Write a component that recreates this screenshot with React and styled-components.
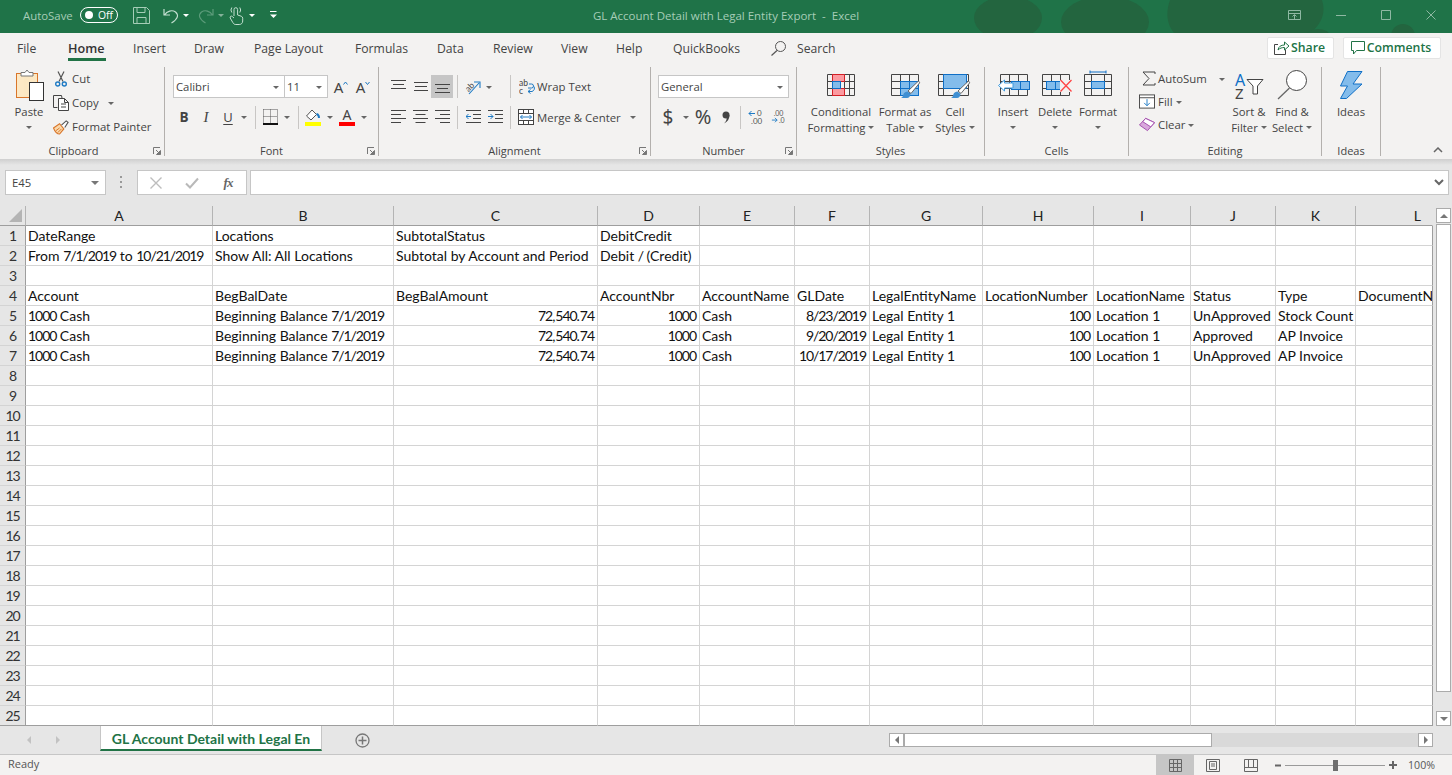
import React from 'react';
import styled, { createGlobalStyle } from 'styled-components';

const UI = `"Open Sans", "Noto Sans", sans-serif`;
const CELL = `Lato, "Liberation Sans", sans-serif`;

const Global = createGlobalStyle`
  html, body { margin: 0; padding: 0; overflow: hidden; background: #f3f2f1; }
  #root { width: 1452px; height: 775px; }
  * { box-sizing: border-box; }
`;

const Window = styled.div`
  width: 1452px; height: 775px; display: flex; flex-direction: column;
  font-family: ${UI}; font-size: 11.4px; color: #444; background: #f3f2f1; overflow: hidden;
`;

/* ---------- title bar ---------- */
const TitleBar = styled.header`
  position: relative; height: 33px; flex: none; background: #1f7348; color: #a6cdb7;
  display: grid; grid-template-columns: 1fr auto 1fr; align-items: center; padding-bottom: 3px;
`;
const Pattern = styled.svg`position: absolute; inset: 0; pointer-events: none;`;
const Qat = styled.div`position: relative; display: flex; align-items: center; padding-left: 23px; height: 30px;`;
const AutoSave = styled.span`font-size: 11.4px; width: 57px;`;
const Toggle = styled.div`
  width: 38px; height: 16px; border: 1px solid #fff; border-radius: 8px; display: flex; align-items: center;
  padding: 0 4px 0 4px; justify-content: space-between; color: #fff; font-size: 10.4px;
  &::before { content: ''; width: 8px; height: 8px; border-radius: 50%; background: #fff; }
`;
const TitleText = styled.div`position: relative; font-size: 11.5px; white-space: pre;`;
const WinButtons = styled.div`position: relative; display: flex; justify-content: flex-end; align-items: center; padding-right: 16px; gap: 35px;`;
const WinIcon = styled.svg`display: block; flex: none;`;
const QatSlot = styled.span`display: flex; margin-left: ${p => p.$ml || 0}px; opacity: ${p => p.$dim ? .45 : 1};`;

/* ---------- ribbon tabs ---------- */
const TabRow = styled.nav`height: 33px; flex: none; display: flex; align-items: center; padding-left: 17px;`;
const Tab = styled.div`
  width: ${p => p.$w}px; font-size: 12.2px; height: 33px; line-height: 31px; color: #444; white-space: nowrap; position: relative;
  ${p => p.$active && `
    font-weight: 600; color: #333; font-size: 12.6px;
    &::after { content: ''; position: absolute; left: 0; width: 38px; bottom: 5px; height: 3px; background: #217346; }
  `}
`;
const SearchBox = styled.div`display: flex; align-items: center; gap: 11px; font-size: 12.2px; margin-top: -2px;`;
const Actions = styled.div`margin-left: auto; margin-right: 11px; margin-top: -4px; display: flex; gap: 9px;`;
const ActionButton = styled.div`
  width: ${p => p.$w}px; height: 22px; background: #fff; border: 1px solid #e4e4e4; border-radius: 2px;
  display: flex; align-items: center; justify-content: center; gap: 2px; padding-right: 2px;
  color: #217346; font-size: 12.3px; font-weight: 600;
`;

/* ---------- ribbon ---------- */
const Ribbon = styled.section`height: 93px; flex: none; display: flex; align-items: flex-start; position: relative;`;
const Group = styled.div`
  width: ${p => p.$w}px; height: 89px; margin-top: 1px; border-right: 1px solid #b3b0ad; display: flex; flex-direction: column;
`;
const GroupBody = styled.div`height: 76px; flex: none; display: flex; padding-left: ${p => p.$pl || 0}px;`;
const GroupLabel = styled.div`
  height: 18px; line-height: 16px; margin-bottom: -5px; text-align: center; font-size: 11px; color: #444; position: relative;
  padding-right: ${p => p.$pr || 0}px;
`;
const Launcher = styled.svg`position: absolute; right: 3px; top: 4px;`;
const Collapse = styled.svg`position: absolute; left: 1433px; top: 81px;`;

const BigButton = styled.div`width: ${p => p.$w}px; display: flex; flex-direction: column; align-items: center; flex: none;`;
const BigIcon = styled.div`height: 36px; display: flex; align-items: center; justify-content: center;`;
const BigLine = styled.div`height: 16px; line-height: 15px; display: flex; align-items: center; gap: 3px; white-space: nowrap; font-size: 11.3px;`;

const Stack = styled.div`display: grid; grid-auto-rows: 23px; row-gap: ${p => p.$gap || 0}px; height: 72px; flex: none; ${p => p.$w && `width:${p.$w}px;`}`;
const SmallItem = styled.div`display: flex; align-items: center; white-space: nowrap; padding-left: ${p => p.$pl || 0}px;`;
const SmallIcon = styled.span`width: 16px; height: 16px; display: flex; align-items: center; justify-content: center; flex: none; margin-right: ${p => p.$mr ?? 3}px;`;

const Rows = styled.div`display: flex; flex-direction: column; padding-top: 8px;`;
const ToolRow = styled.div`display: flex; align-items: center; height: ${p => p.$h || 24}px; margin-bottom: ${p => p.$mb || 0}px;`;
const Tool = styled.div`
  width: ${p => p.$w}px; height: 23px; display: flex; align-items: center; justify-content: center; flex: none;
  margin-left: ${p => p.$ml || 0}px; color: #444;
  ${p => p.$on && 'background: #c6c6c6;'}
`;
const Sep = styled.div`width: 1px; height: 23px; background: #c8c6c4; flex: none; margin-left: ${p => p.$ml || 0}px;`;
const Caret = styled.span`
  width: 0; height: 0; border: 3px solid transparent; border-top: 3px solid ${p => p.$c || '#666'}; border-bottom: 0; flex: none;
  margin-left: ${p => p.$ml || 0}px; margin-top: 1px;
`;
const ToolText = styled.span`margin-left: ${p => p.$ml || 0}px; white-space: nowrap;`;
const Combo = styled.div`
  width: ${p => p.$w}px; height: 23px; background: #fff; border: 1px solid #c6c6c6; flex: none; margin-left: ${p => p.$ml || 0}px;
  display: flex; align-items: center; justify-content: space-between; padding: 0 5px 0 2px; color: #444; font-family: ${UI}; font-size: 11.3px;
`;
const GlyphB = styled.span`font-weight: 700; font-size: 13.5px;`;
const GlyphI = styled.span`font-style: italic; font-family: "Liberation Serif", serif; font-size: 15px;`;
const GlyphU = styled.span`font-size: 13px; text-decoration: underline; text-underline-offset: 2px;`;
const GlyphBig = styled.span`font-size: ${p => p.$s || 14}px; line-height: 1; color: #444; font-family: "Noto Sans", sans-serif;`;
const SizeA = styled.span`display: flex; align-items: flex-start; font-family: "Noto Sans", sans-serif; font-size: 15px; line-height: 18px; color: #444;`;
const ColorA = styled.span`
  display: flex; flex-direction: column; align-items: center; width: 16px; font-family: "Noto Sans", sans-serif; font-size: 14px; line-height: 13px; color: #444;
  &::after { content: ''; width: 16px; height: 4px; background: #f00; margin-top: 1px; }
`;

/* ---------- formula bar ---------- */
const FormulaBar = styled.section`
  height: 47px; flex: none; background: linear-gradient(#cfcfcf 0, #e6e6e6 6px); display: flex; align-items: flex-start; padding: 11px 3px 0 5px;
`;
const NameBox = styled.div`
  width: 101px; height: 25px; background: #fff; border: 1px solid #c6c6c6; display: flex; align-items: center; justify-content: space-between;
  padding: 0 6px 0 6px; font-size: 11.3px; color: #444;
`;
const Dots = styled.div`width: 31px; height: 25px; display: flex; justify-content: center; align-items: center;`;
const FxBox = styled.div`
  width: 110px; height: 25px; background: #fff; border: 1px solid #c6c6c6; display: grid; grid-template-columns: repeat(3, 36px); align-items: center; justify-items: center;
`;
const Fx = styled.span`font-family: "Liberation Serif", serif; font-style: italic; font-weight: 700; color: #666; font-size: 13px; letter-spacing: -1px;`;
const FormulaInput = styled.div`
  flex: 1; margin-left: 3px; height: 25px; background: #fff; border: 1px solid #c6c6c6; display: flex; align-items: center; justify-content: flex-end; padding-right: 4px;
`;

/* ---------- sheet ---------- */
const SheetArea = styled.section`height: 520px; flex: none; display: flex; background: #e6e6e6;`;
const Grid = styled.div`
  width: 1433px; height: 520px; flex: none; display: grid; overflow: hidden;
  grid-template-columns: 26px 187px 181px 204px 102px 95px 75px 113px 111px 97px 85px 80px 77px;
  grid-template-rows: repeat(26, 20px);
  font-family: ${CELL}; font-size: 14px;
`;
const Num = styled.span`letter-spacing: -1.05px;`;
const Corner = styled.div`background: #e6e6e6; border-bottom: 1px solid #9e9e9e; border-right: 1px solid #b4b4b4; display: flex; align-items: flex-end; justify-content: flex-end; padding: 0 3px 3px 0;`;
const ColHead = styled.div`
  background: #e6e6e6; border-bottom: 1px solid #9e9e9e; border-right: 1px solid #b4b4b4; text-align: center; line-height: 19px; color: #222;
  ${p => p.$last && 'border-right-color: transparent; text-align: right; padding-right: 11px;'}
`;
const RowHead = styled.div`
  background: #e6e6e6; border-right: 1px solid #9e9e9e; border-bottom: 1px solid #d4d4d4; text-align: center; line-height: 20px; color: #333; padding-right: 0;
  ${p => p.$last && 'border-bottom-color: #9e9e9e;'}
`;
const Cell = styled.div`
  background: #fff; border-right: 1px solid #d4d4d4; border-bottom: 1px solid #d4d4d4; padding: 0 ${p => p.$right ? 3 : 2}px 0 2px; line-height: 20px; color: #111; white-space: nowrap; overflow: hidden;
  text-align: ${p => p.$right ? 'right' : 'left'};
  ${p => p.$lastCol && 'border-right: 1px solid #9e9e9e;'}
  ${p => p.$lastRow && 'border-bottom: 1px solid #9e9e9e;'}
`;
const VScroll = styled.div`width: 19px; height: 520px; flex: none; padding: 2px 1px 0 3px; display: flex; flex-direction: column;`;
const ScrollBtn = styled.div`
  width: ${p => p.$w || 15}px; height: ${p => p.$h || 15}px; flex: none; background: #fff; border: 1px solid #ababab; display: flex; align-items: center; justify-content: center;
`;
const VThumb = styled.div`height: 468px; flex: none; background: #fff; border: 1px solid #ababab; margin-top: 1px;`;
const VGap = styled.div`flex: 1;`;
const Tri = styled.span`
  width: 0; height: 0; border: 4px solid transparent;
  ${p => p.$dir === 'up' && `border-bottom: 4px solid ${p.$c || '#777'}; border-top: 0;`}
  ${p => p.$dir === 'down' && `border-top: 4px solid ${p.$c || '#777'}; border-bottom: 0;`}
  ${p => p.$dir === 'left' && `border-right: 4px solid ${p.$c || '#777'}; border-left: 0;`}
  ${p => p.$dir === 'right' && `border-left: 4px solid ${p.$c || '#777'}; border-right: 0;`}
`;

/* ---------- sheet tabs ---------- */
const TabBar = styled.section`height: 29px; flex: none; background: #e6e6e6; border-bottom: 1px solid #c6c6c6; display: flex; align-items: flex-start;`;
const TabNav = styled.div`width: 100px; height: 28px; display: flex; align-items: center; padding-left: 27px; gap: 25px; flex: none;`;
const SheetTab = styled.div`
  width: 222px; height: 25px; background: #fff; border-bottom: 2px solid #217346; border-left: 1px solid #c6c6c6; border-right: 1px solid #c6c6c6;
  text-align: center; line-height: 25px; font-family: ${CELL}; color: #217346; font-weight: 700; font-size: 14px; flex: none; white-space: nowrap;
`;
const AddSheet = styled.div`margin-left: 33px; height: 28px; display: flex; align-items: center; flex: none;`;
const HScroll = styled.div`margin-left: 519px; width: 544px; height: 14px; margin-top: 7px; display: flex; background: #d9d9d9; flex: none;`;
const HThumb = styled.div`width: 308px; height: 14px; background: #fff; border: 1px solid #ababab; margin-left: 0;`;

/* ---------- status bar ---------- */
const StatusBar = styled.footer`height: 20px; flex: none; display: flex; align-items: flex-start; padding-left: 8px; font-size: 11px; color: #555; line-height: 18px;`;
const StatusRight = styled.div`margin-left: auto; display: flex; align-items: center; height: 20px; padding-right: 17px;`;
const ViewBtn = styled.div`width: ${p => p.$w || 38}px; height: 20px; display: flex; align-items: center; justify-content: center; ${p => p.$on && 'background: #c6c6c6;'}`;
const Zoomer = styled.div`display: flex; align-items: center;`;
const ZoomTrack = styled.div`width: 100px; height: 1px; background: #9a9a9a; margin: 0 4px; display: flex; justify-content: center; align-items: center;`;
const ZoomThumb = styled.div`width: 5px; height: 11px; background: #6e6e6e; flex: none;`;
const ZoomPct = styled.span`margin-left: 11px; font-size: 10.6px; color: #555;`;

/* ---------- icons ---------- */
const S = ({ w, h, children, ...r }) => <svg width={w} height={h} viewBox={`0 0 ${w} ${h}`} fill="none" {...r}>{children}</svg>;
const BLUE = '#1e7ac4', LB = '#83bceb', DB = '#0f6fc6';

const Save = () => <S w={17} h={17}><path d="M.5.5h13l3 3v13H.5z M4 .5v5h8v-5 M4 16.500v-6h9v6" stroke="#a6cdb7"/></S>;
const Undo = ({ c = '#c3dfd0' }) => <S w={17} h={17}><path d="M1 2v6h6 M1.500 8C4 4 9 2.500 12.500 5c3.500 3 2.500 7-4 11" stroke={c} strokeWidth="1.200"/></S>;
const Redo = () => <S w={17} h={17} style={{ transform: 'scaleX(-1)' }}><path d="M1 2v6h6 M1.500 8C4 4 9 2.500 12.500 5c3.500 3 2.500 7-4 11" stroke="#a6cdb7" strokeWidth="1.200"/></S>;
const Touch = () => <S w={15} h={19}><path d="M5 10V3.500a1.800 1.800 0 0 1 3.600 0V9l3.600 1.200c1 .4 1.500 1 1.500 2V15c0 2-1.300 3.500-3.500 3.500H6.800c-1.500 0-2.300-.7-3-2L1.200 12c-.6-1.500 1-2.600 2.200-1.400L5 12 M2.800 6.500a4.300 4.300 0 0 1 0-5 M10.800 1.500a4.300 4.300 0 0 1 0 5" stroke="#c3dfd0"/></S>;
const QatMore = () => <S w={7} h={8}><path d="M0 .5h6.500" stroke="#fff"/><path d="M0 3.500h7l-3.500 3.500z" fill="#fff"/></S>;
const Paste = () => (
  <S w={30} h={32}>
    <rect x="2.500" y="4.500" width="21" height="24" fill="#fce8c3" stroke="#d9762b"/>
    <rect x="3.500" y="5.500" width="6" height="22" fill="#fde9c5"/>
    <path d="M7 7V3.500h4L13 1l2 2.500h4V7z" fill="#fff" stroke="#777"/>
    <rect x="15.500" y="13.500" width="14" height="18" fill="#fff" stroke="#333"/>
  </S>
);
const Scissors = () => (
  <S w={12} h={16}><path d="M3 .5 8 10.500 M9 .5 4 10.500" stroke="#555" strokeWidth="1.200"/><circle cx="2.700" cy="13" r="2" stroke={BLUE} strokeWidth="1.400"/><circle cx="9.300" cy="13" r="2" stroke={BLUE} strokeWidth="1.400"/></S>
);
const Copy = () => <S w={16} h={16}><path d="M4.500 12.500H.5V.5h8L9 3" stroke="#444"/><path d="M5.500 3.500h6l4 4v8h-10z M11.500 3.500v4h4 M8 9h5 M8 12h5" stroke="#444" fill="#fff"/></S>;
const Painter = () => <S w={17} h={16}><path d="M.5 9 7 4.500l4.500 5.500L7 15.500C4 15.500 2 13 .5 9z" fill="#fbd9ab" stroke="#d9762b" strokeWidth="1.200"/><path d="M3 12 7 9 M5 14l4-4" stroke="#d9762b"/><path d="M9 6 14 1.500l2 1.500-3.500 5.500" fill="#fff" stroke="#555" strokeWidth="1.200"/></S>;
const Chevron = ({ up }) => <S w={5} h={4} style={{ marginTop: 3 }}><path d={up ? 'M.5 3.500 2.500 1l2 2.500' : 'M.5 1l2 2.500 2-2.500'} stroke={BLUE}/></S>;
const Borders = () => <S w={15} h={16}><path d="M.5.5h14M.5 7.500h14M.5.5v14M7.500.5v14M14.500.5v14" stroke="#555" strokeDasharray="1 1"/><path d="M0 15h15" stroke="#111" strokeWidth="2"/></S>;
const FillColor = () => <S w={16} h={17}><path d="M7 1 1.500 7 6 11l5.500-5.500z" fill="#fff" stroke="#555"/><path d="M11.500 5c2 .5 2.500 2 2.500 4" stroke={BLUE} strokeWidth="2"/><rect x="0" y="13" width="16" height="4" fill="#ffff00"/></S>;
const Lines = ({ rows }) => <S w={15} h={15}>{rows.map((r, i) => <path key={i} d={`M${r[0]} ${r[2] + .5}H${r[1]}`} stroke="#444"/>)}</S>;
const AlignTop = () => <Lines rows={[[0, 15, 1], [2, 13, 5], [0, 15, 9]]} />;
const AlignMid = () => <Lines rows={[[1, 15, 3], [2, 14, 7], [1, 15, 11]]} />;
const AlignBot = () => <Lines rows={[[0, 15, 5], [2, 13, 9], [0, 15, 13]]} />;
const L4 = ({ a }) => <S w={15} h={14}>{[0, 4, 8, 12].map((y, i) => { const s = i % 2 ? 10 : 15; const x = a === 'l' ? 0 : a === 'r' ? 15 - s : (15 - s) / 2; return <path key={y} d={`M${x} ${y + .5}h${s}`} stroke="#444"/>; })}</S>;
const Orient = () => <S w={20} h={20}><text x="4" y="13" transform="rotate(-45 8 11)" fontFamily="Lato, sans-serif" fontSize="8.500" fill="#444">ab</text><path d="M7 17 17 6 M12 5h6v6" stroke={BLUE} strokeWidth="1.100"/></S>;
const Wrap = () => <S w={16} h={20}><text x="0" y="9" fontFamily="Lato, sans-serif" fontSize="8.500" fill="#444">ab</text><text x="0" y="17" fontFamily="Lato, sans-serif" fontSize="8.500" fill="#444">c</text><path d="M9 11h3.500a2 2 0 0 0 0-4H10M9 14.500h4a3.500 3.500 0 0 0 2-5 M9 14.500l2.500-2 M9 14.500l2.500 2" stroke={BLUE}/></S>;
const IndentDec = () => <S w={15} h={14}><path d="M0 .5h15 M7 4.500h8 M7 8.500h8 M0 12.500h15" stroke="#444"/><path d="M0 6.500h5 M2.500 4 0 6.500 2.500 9" stroke={BLUE}/></S>;
const IndentInc = () => <S w={15} h={14}><path d="M0 .5h15 M7 4.500h8 M7 8.500h8 M0 12.500h15" stroke="#444"/><path d="M0 6.500h5 M2.500 4 5 6.500 2.500 9" stroke={BLUE}/></S>;
const Merge = () => <S w={16} h={16}><rect x=".5" y=".5" width="15" height="15" fill="#fff" stroke="#444"/><path d="M5.500.5v3.500 M10.500.5v3.500 M5.500 12v3.500 M10.500 12v3.500 M.5 4.500h15 M.5 11.500h15" stroke="#444"/><path d="M2.500 8h11 M4.500 6 2.500 8l2 2 M11.500 6l2 2-2 2" stroke={BLUE}/></S>;
const IncDec = () => <S w={16} h={20}><path d="M1 6.500h6 M3.500 4 1 6.500 3.500 9" stroke={BLUE}/><text x="9" y="9" fontFamily="Lato, sans-serif" fontSize="8" fill="#555">0</text><text x="3" y="17" fontFamily="Lato, sans-serif" fontSize="8" fill="#555">.00</text></S>;
const DecDec = () => <S w={16} h={20}><text x="3" y="9" fontFamily="Lato, sans-serif" fontSize="8" fill="#555">.00</text><path d="M1 13.500h6 M4.500 11 7 13.500 4.500 16" stroke={BLUE}/><text x="9" y="17" fontFamily="Lato, sans-serif" fontSize="8" fill="#555">.0</text></S>;
const Comma = () => <S w={8} h={13}><circle cx="4" cy="4" r="3.500" fill="#444"/><path d="M7.500 4c0 4-2 7-5.500 8.500C4.500 10 5 8 4.500 6z" fill="#444"/></S>;

const GridLines = ({ x = 0, y = 0, v, h, w = 28, ht = 21 }) => (
  <g transform={`translate(${x} ${y})`}>
    <path d={`M.5.5H${w - .5}V${ht + .5}H.5z ${v.map(q => `M${q}.5 .5V${ht}`).join(' ')} ${h.map(q => `M.5 ${q}.5H${w}`).join(' ')}`} stroke="#444" fill="none"/>
  </g>
);
const Brush = ({ x = 0, y = 0 }) => (
  <g transform={`translate(${x} ${y})`}>
    <path d="M18 .5c.8-.5 2 .5 1.500 1.500L11 12.500 8 10z" fill="#fff" stroke="#666"/>
    <path d="M7.500 10.500 10.500 13c0 2-1.500 4-3.500 4H1c2-1 2-2.500 2.500-4 .5-1.500 2.500-2.500 4-2.500z" fill="#3f8fd2"/>
  </g>
);
const CondFormat = () => (
  <S w={28} h={22}>
    <GridLines v={[5, 17, 22]} h={[7, 14]} />
    <path d="M5.500.5h12v7h-12z M5.500 14.500h12v7h-12z" fill="#fb9aa0" stroke="#d41f26"/>
    <rect x="5.500" y="7.500" width="8" height="7" fill={LB} stroke={DB}/>
  </S>
);
const FormatTable = () => (
  <S w={32} h={28}>
    <GridLines x={2} y={3} v={[9, 18]} h={[7, 14]} />
    <rect x="11.500" y="10.500" width="18" height="14" fill={LB} stroke={DB}/>
    <path d="M20.500 10.500v14 M11.500 17.500h18" stroke={DB}/>
    <Brush x={11} y={10} />
  </S>
);
const CellStyles = () => (
  <S w={34} h={28}>
    <GridLines y={3} w={31} v={[5]} h={[7, 14]} />
    <rect x="5.500" y="3.500" width="23" height="14" fill={LB} stroke={DB}/>
    <Brush x={12} y={10} />
  </S>
);
const InsertIcon = () => (
  <S w={34} h={22}>
    <GridLines x={4} v={[9, 18]} h={[7, 14]} />
    <rect x="15.500" y="7.500" width="18" height="8" fill={LB} stroke={DB}/><path d="M24.500 7.500v8" stroke={DB}/>
    <path d="M2.500 11.500 8.500 6v3H17v5H8.500v3z" fill="#fff" stroke="#3c9be0"/>
  </S>
);
const DeleteIcon = () => (
  <S w={34} h={22}>
    <GridLines x={4} v={[9, 18]} h={[7, 14]} />
    <rect x="8.500" y="7.500" width="14" height="8" fill={LB} stroke={DB}/><path d="M17.500 7.500v8" stroke={DB}/>
    <rect x="22" y="6" width="12" height="12" fill="#f3f2f1"/>
    <path d="M22.500 6 33.500 17.500 M33.500 6 22.500 17.500" stroke="#f44" strokeWidth="1.300"/>
  </S>
);
const FormatIcon = () => (
  <S w={28} h={30}>
    <path d="M6 .5v3 M22 .5v3 M6 2h16" stroke={DB}/>
    <GridLines y={4} v={[7, 20]} h={[7, 14]} />
    <rect x="7.500" y="11.500" width="13" height="7" fill={LB} stroke={DB}/>
  </S>
);
const Sigma = () => <S w={14} h={15}><path d="M13 3V1H1l6 6.500L1 14h12v-2" stroke="#444" fill="none"/></S>;
const FillIcon = () => <S w={17} h={15}><rect x=".5" y=".5" width="16" height="14" stroke="#444" fill="#fff"/><path d="M.5 3.500h16" stroke="#444"/><path d="M8.500 5v7 M5.500 9l3 3 3-3" stroke={BLUE}/></S>;
const Eraser = () => <S w={17} h={15}><path d="M.5 8 7 1l9.500 4.500L9 14z" fill="#d8a8dc" stroke="#a24bad"/><path d="M7 1l9.500 4.500-4 4.500L4 4.500z" fill="#fff" stroke="#a24bad"/></S>;
const SortIcon = () => (
  <S w={30} h={36}>
    <text x="1" y="19" fontFamily="Noto Sans, sans-serif" fontSize="16" fill={DB}>A</text>
    <text x="1" y="32" fontFamily="Noto Sans, sans-serif" fontSize="15" fill="#444">Z</text>
    <path d="M13 12.500H29L23.500 19v8H19v-8z" stroke="#444" fill="#fff"/>
  </S>
);
const FindIcon = () => <S w={30} h={30}><circle cx="19.500" cy="10.500" r="10" stroke="#444" fill="#fff"/><path d="M12.500 18 1 29" stroke="#666" strokeWidth="1.300"/></S>;
const Bolt = () => <S w={23} h={28}><path d="M7.500.5H22L13 13h9L6.500 27.500H.5L7.500 15H.5z" fill={LB} stroke={DB}/></S>;
const LauncherIcon = () => <Launcher width="8" height="8" viewBox="0 0 8 8"><path d="M.5 7V.5H7" stroke="#777" fill="none"/><path d="M3 3l3 3M7.500 3.500v4h-4z" stroke="#777" fill="#777"/></Launcher>;
const SearchIcon = () => <S w={15} h={15}><circle cx="9.500" cy="5.500" r="5" stroke="#555"/><path d="M6 9.500.5 14.500" stroke="#555" strokeWidth="1.200"/></S>;
const ShareIcon = () => <S w={15} h={15}><path d="M4 4.500H.5v10h11v-5" stroke="#444"/><path d="M4 10c.5-3.500 3-5 6.500-5V2L15 6l-4.500 4V7.500C8 7.500 6 8 4 10z" stroke="#217346" fill="#fff"/></S>;
const CommentIcon = () => <S w={14} h={14}><path d="M.5.5h13v9H5.500L2.500 13v-3.500h-2z" stroke="#217346"/></S>;
const ThinX = ({ c }) => <S w={12} h={12}><path d="M.5.5l11 11M11.500.5l-11 11" stroke={c} strokeWidth="1.400"/></S>;
const Check = () => <S w={14} h={12}><path d="M1 6.500 5 10.500 13 1.500" stroke="#b9b9b9" strokeWidth="2"/></S>;
const PlusCircle = () => <S w={15} h={15}><circle cx="7.500" cy="7.500" r="6.500" stroke="#777" strokeWidth="1.300"/><path d="M3.500 7.500h8M7.500 3.500v8" stroke="#777" strokeWidth="1.500"/></S>;
const NormalView = () => <S w={13} h={13}><path d="M.5.5h12v12H.5z M4.500.5v12 M8.500.5v12 M.5 4.500h12 M.5 8.500h12" stroke="#666"/></S>;
const LayoutView = () => <S w={14} h={13}><path d="M.5.5h13v12H.5z" stroke="#666"/><path d="M3.500 2.500h7v8h-7z M5 5h4M5 7h4" stroke="#666"/></S>;
const BreakView = () => <S w={14} h={13}><path d="M.5.5h13v12H.5z M.5 8.500h13 M4.500.5v8 M9.500.5v8" stroke="#666"/></S>;

/* ---------- data ---------- */
const cols = ['A', 'B', 'C', 'D', 'E', 'F', 'G', 'H', 'I', 'J', 'K', 'L'];
const R = (t) => ({ t, r: true });
const rows = {
  1: ['DateRange', 'Locations', 'SubtotalStatus', 'DebitCredit'],
  2: ['From 7/1/2019 to 10/21/2019', 'Show All: All Locations', 'Subtotal by Account and Period', 'Debit / (Credit)'],
  4: ['Account', 'BegBalDate', 'BegBalAmount', 'AccountNbr', 'AccountName', 'GLDate', 'LegalEntityName', 'LocationNumber', 'LocationName', 'Status', 'Type', 'DocumentN'],
  5: ['1000 Cash', 'Beginning Balance 7/1/2019', R('72,540.74'), R('1000'), 'Cash', R('8/23/2019'), 'Legal Entity 1', R('100'), 'Location 1', 'UnApproved', 'Stock Count'],
  6: ['1000 Cash', 'Beginning Balance 7/1/2019', R('72,540.74'), R('1000'), 'Cash', R('9/20/2019'), 'Legal Entity 1', R('100'), 'Location 1', 'Approved', 'AP Invoice'],
  7: ['1000 Cash', 'Beginning Balance 7/1/2019', R('72,540.74'), R('1000'), 'Cash', R('10/17/2019'), 'Legal Entity 1', R('100'), 'Location 1', 'UnApproved', 'AP Invoice'],
};
const tabs = [['File', 51], ['Home', 65, true], ['Insert', 61], ['Draw', 60], ['Page Layout', 101], ['Formulas', 82], ['Data', 56], ['Review', 68], ['View', 55], ['Help', 57], ['QuickBooks', 98]];

const CellText = ({ text }) => text
  ? text.split(/([\d/]+)/).map((part, i) => (i % 2 ? <Num key={i}>{part}</Num> : part))
  : null;

const Big = ({ w, icon, l1, l2, caret }) => (
  <BigButton $w={w}>
    <BigIcon>{icon}</BigIcon>
    <BigLine>{l1}</BigLine>
    <BigLine>{l2}{caret && <Caret />}</BigLine>
  </BigButton>
);

export default function App() {
  return (
    <Window>
      <Global />
      <TitleBar>
        <Pattern width="1452" height="33" viewBox="0 0 1452 33">
          <g fill="#23653f">
            <ellipse cx="1008" cy="18" rx="34" ry="22" />
            <ellipse cx="1105" cy="22" rx="44" ry="26" />
            <path d="M1170 0h152c4 12 0 24-12 33h-136c-8-10-8-22-4-33z" />
            <circle cx="1403" cy="36" r="12" />
            <ellipse cx="1318" cy="36" rx="12" ry="7" />
          </g>
        </Pattern>
        <Qat>
          <AutoSave>AutoSave</AutoSave>
          <Toggle>Off</Toggle>
          <QatSlot $ml={15}><Save /></QatSlot>
          <QatSlot $ml={13}><Undo /></QatSlot>
          <QatSlot $ml={3}><Caret $c="#fff" /></QatSlot>
          <QatSlot $ml={8} $dim><Redo /></QatSlot>
          <QatSlot $ml={4} $dim><Caret $c="#fff" /></QatSlot>
          <QatSlot $ml={5}><Touch /></QatSlot>
          <QatSlot $ml={5}><Caret $c="#fff" /></QatSlot>
          <QatSlot $ml={15}><QatMore /></QatSlot>
        </Qat>
        <TitleText>GL Account Detail with Legal Entity Export  -  Excel</TitleText>
        <WinButtons>
          <WinIcon width="13" height="10" viewBox="0 0 13 10" fill="none"><path d="M.5.5h12v9H.5z M.5 3.500h12 M6.500 9V5 M4.500 6.500l2-2 2 2" stroke="#8fb8a3"/></WinIcon>
          <WinIcon width="10" height="10" viewBox="0 0 10 10" fill="none"><path d="M0 5.500h10" stroke="#8fb8a3"/></WinIcon>
          <WinIcon width="10" height="10" viewBox="0 0 10 10" fill="none"><path d="M.5.5h9v9H.5z" stroke="#8fb8a3"/></WinIcon>
          <WinIcon width="10" height="10" viewBox="0 0 10 10" fill="none"><path d="M.5.5l9 9M9.500.5l-9 9" stroke="#8fb8a3"/></WinIcon>
        </WinButtons>
      </TitleBar>

      <TabRow>
        {tabs.map(([t, w, a]) => <Tab key={t} $w={w} $active={a}>{t}</Tab>)}
        <SearchBox><SearchIcon />Search</SearchBox>
        <Actions>
          <ActionButton $w={67}><ShareIcon />Share</ActionButton>
          <ActionButton $w={98}><CommentIcon />Comments</ActionButton>
        </Actions>
      </TabRow>

      <Ribbon>
        <Group $w={165}>
          <GroupBody $pl={8}>
            <Big w={42} icon={<Paste />} l1="Paste" l2={<Caret />} />
            <Stack $gap={1}>
              <SmallItem $pl={3}><SmallIcon><Scissors /></SmallIcon>Cut</SmallItem>
              <SmallItem $pl={3}><SmallIcon><Copy /></SmallIcon>Copy<Caret $ml={9} /></SmallItem>
              <SmallItem $pl={3}><SmallIcon><Painter /></SmallIcon>Format Painter</SmallItem>
            </Stack>
          </GroupBody>
          <GroupLabel $pr={17}>Clipboard<LauncherIcon /></GroupLabel>
        </Group>

        <Group $w={214}>
          <GroupBody $pl={8}>
            <Rows>
              <ToolRow $h={23} $mb={7}>
                <Combo $w={112}>Calibri<Caret /></Combo>
                <Combo $w={44} style={{ marginLeft: -1 }}>11<Caret /></Combo>
                <Tool $w={22} $ml={2}><SizeA>A<Chevron up /></SizeA></Tool>
                <Tool $w={22}><SizeA>A<Chevron /></SizeA></Tool>
              </ToolRow>
              <ToolRow>
                <Tool $w={22}><GlyphB>B</GlyphB></Tool>
                <Tool $w={22}><GlyphI>I</GlyphI></Tool>
                <Tool $w={22}><GlyphU>U</GlyphU></Tool>
                <Caret $ml={2} />
                <Sep $ml={8} />
                <Tool $w={28}><Borders /></Tool>
                <Caret />
                <Sep $ml={8} />
                <Tool $w={28}><FillColor /></Tool>
                <Caret />
                <Tool $w={28}><ColorA>A</ColorA></Tool>
                <Caret />
              </ToolRow>
            </Rows>
          </GroupBody>
          <GroupLabel>Font<LauncherIcon /></GroupLabel>
        </Group>

        <Group $w={272}>
          <GroupBody $pl={8}>
            <Rows>
              <ToolRow $h={23} $mb={7}>
                <Tool $w={22}><AlignTop /></Tool>
                <Tool $w={22}><AlignMid /></Tool>
                <Tool $w={22} $on><AlignBot /></Tool>
                <Sep $ml={4} />
                <Tool $w={28}><Orient /></Tool>
                <Caret />
                <Sep $ml={18} />
                <Tool $w={16} $ml={8}><Wrap /></Tool>
                <ToolText $ml={2}>Wrap Text</ToolText>
              </ToolRow>
              <ToolRow>
                <Tool $w={22}><L4 a="l" /></Tool>
                <Tool $w={22}><L4 a="c" /></Tool>
                <Tool $w={22}><L4 a="r" /></Tool>
                <Sep $ml={4} />
                <Tool $w={30}><IndentDec /></Tool>
                <Tool $w={15}><IndentInc /></Tool>
                <Sep $ml={7} />
                <Tool $w={16} $ml={7}><Merge /></Tool>
                <ToolText $ml={3}>Merge &amp; Center</ToolText>
                <Caret $ml={9} />
              </ToolRow>
            </Rows>
          </GroupBody>
          <GroupLabel>Alignment<LauncherIcon /></GroupLabel>
        </Group>

        <Group $w={146}>
          <GroupBody $pl={7}>
            <Rows>
              <ToolRow $h={23} $mb={7}>
                <Combo $w={131}>General<Caret /></Combo>
              </ToolRow>
              <ToolRow>
                <Tool $w={20}><GlyphBig $s={19}>$</GlyphBig></Tool>
                <Tool $w={15}><Caret /></Tool>
                <Tool $w={20}><GlyphBig $s={20}>%</GlyphBig></Tool>
                <Tool $w={25}><Comma /></Tool>
                <Sep $ml={2} />
                <Tool $w={30}><IncDec /></Tool>
                <Tool $w={14}><DecDec /></Tool>
              </ToolRow>
            </Rows>
          </GroupBody>
          <GroupLabel>Number<LauncherIcon /></GroupLabel>
        </Group>

        <Group $w={188}>
          <GroupBody $pl={12}>
            <Big w={64} icon={<CondFormat />} l1="Conditional" l2="Formatting" caret />
            <Big w={64} icon={<FormatTable />} l1="Format as" l2="Table" caret />
            <Big w={36} icon={<CellStyles />} l1="Cell" l2="Styles" caret />
          </GroupBody>
          <GroupLabel>Styles</GroupLabel>
        </Group>

        <Group $w={144}>
          <GroupBody $pl={7}>
            <Big w={42} icon={<InsertIcon />} l1="Insert" l2={<Caret />} />
            <Big w={42} icon={<DeleteIcon />} l1="Delete" l2={<Caret />} />
            <Big w={44} icon={<FormatIcon />} l1="Format" l2={<Caret />} />
          </GroupBody>
          <GroupLabel>Cells</GroupLabel>
        </Group>

        <Group $w={193}>
          <GroupBody $pl={10}>
            <Stack $w={90}>
              <SmallItem $pl={2}><SmallIcon $mr={1}><Sigma /></SmallIcon><ToolText>AutoSum</ToolText><Caret $ml={12} /></SmallItem>
              <SmallItem><SmallIcon $mr={3}><FillIcon /></SmallIcon>Fill<Caret $ml={3} /></SmallItem>
              <SmallItem><SmallIcon $mr={3}><Eraser /></SmallIcon>Clear<Caret $ml={3} /></SmallItem>
            </Stack>
            <Big w={40} icon={<SortIcon />} l1="Sort &" l2="Filter" caret />
            <Big w={46} icon={<FindIcon />} l1="Find &" l2="Select" caret />
          </GroupBody>
          <GroupLabel>Editing</GroupLabel>
        </Group>

        <Group $w={59}>
          <GroupBody>
            <Big w={58} icon={<Bolt />} l1="Ideas" l2="" />
          </GroupBody>
          <GroupLabel>Ideas</GroupLabel>
        </Group>
        <Collapse width="10" height="6" viewBox="0 0 10 6"><path d="M1 5l4-4 4 4" stroke="#666" strokeWidth="1.500" fill="none"/></Collapse>
      </Ribbon>

      <FormulaBar>
        <NameBox>E45<Tri $dir="down" $c="#777" /></NameBox>
        <Dots><S w={3} h={13}><path d="M0 1h2M0 6h2M0 11h2" stroke="#999" strokeWidth="2"/></S></Dots>
        <FxBox><ThinX c="#bdbdbd" /><Check /><Fx>fx</Fx></FxBox>
        <FormulaInput><S w={10} h={7}><path d="M1 1l4 4 4-4" stroke="#666" strokeWidth="2" fill="none"/></S></FormulaInput>
      </FormulaBar>

      <SheetArea>
        <Grid>
          <Corner><S w={13} h={13}><path d="M13 0v13H0z" fill="#b4b4b4"/></S></Corner>
          {cols.map((c, i) => <ColHead key={c} $last={i === 11}>{c}</ColHead>)}
          {Array.from({ length: 25 }, (_, i) => i + 1).map(n => (
            <React.Fragment key={n}>
              <RowHead $last={n === 25}><CellText text={String(n)} /></RowHead>
              {cols.map((c, i) => {
                const v = rows[n]?.[i];
                const right = v && v.r;
                return <Cell key={c} $right={right} $lastCol={i === 11} $lastRow={n === 25}><CellText text={right ? v.t : v} /></Cell>;
              })}
            </React.Fragment>
          ))}
        </Grid>
        <VScroll>
          <ScrollBtn><Tri $dir="up" /></ScrollBtn>
          <VThumb />
          <VGap />
          <ScrollBtn><Tri $dir="down" /></ScrollBtn>
        </VScroll>
      </SheetArea>

      <TabBar>
        <TabNav><Tri $dir="left" $c="#c2c2c2" /><Tri $dir="right" $c="#c2c2c2" /></TabNav>
        <SheetTab>GL Account Detail with Legal En</SheetTab>
        <AddSheet><PlusCircle /></AddSheet>
        <HScroll>
          <ScrollBtn $w={15} $h={14}><Tri $dir="left" /></ScrollBtn>
          <HThumb />
          <VGap />
          <ScrollBtn $w={15} $h={14}><Tri $dir="right" /></ScrollBtn>
        </HScroll>
      </TabBar>

      <StatusBar>
        Ready
        <StatusRight>
          <ViewBtn $on><NormalView /></ViewBtn>
          <ViewBtn><LayoutView /></ViewBtn>
          <ViewBtn><BreakView /></ViewBtn>
          <Zoomer>
            <S w={6} h={3} style={{ marginLeft: 5 }}><path d="M0 1.500h6" stroke="#666" strokeWidth="2"/></S>
            <ZoomTrack><ZoomThumb /></ZoomTrack>
            <S w={8} h={8}><path d="M0 4h8M4 0v8" stroke="#666" strokeWidth="2"/></S>
          </Zoomer>
          <ZoomPct>100%</ZoomPct>
        </StatusRight>
      </StatusBar>
    </Window>
  );
}
